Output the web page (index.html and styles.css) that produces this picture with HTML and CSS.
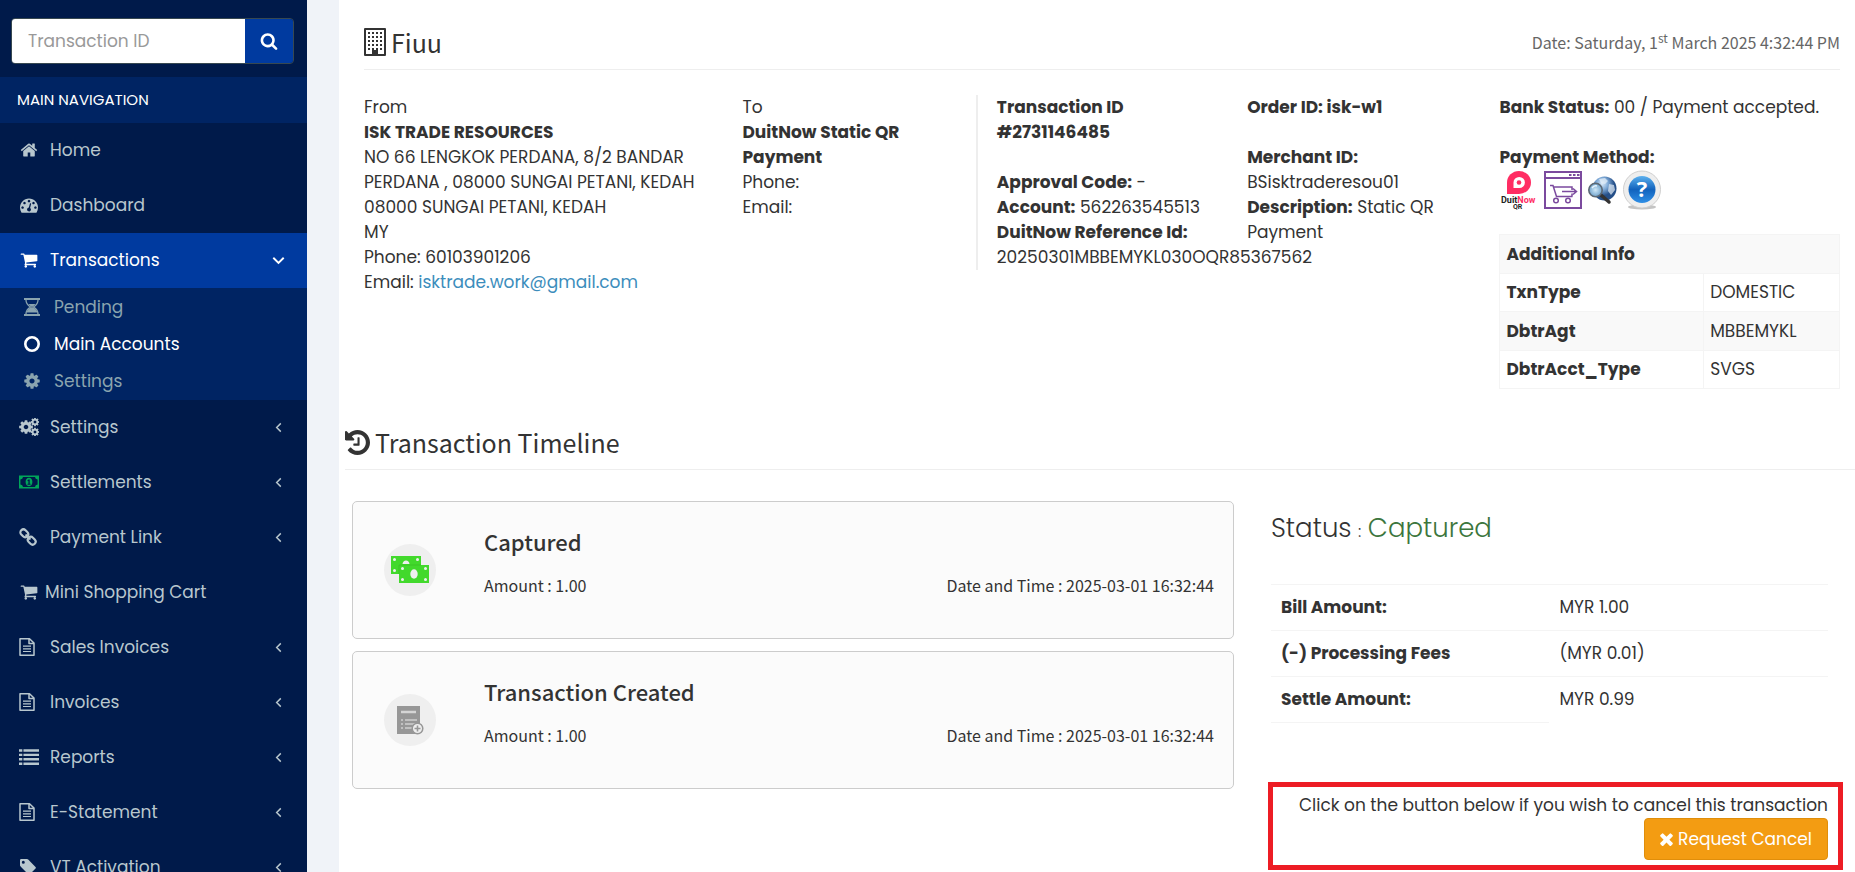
FILE: index.html
```html
<!DOCTYPE html>
<html lang="en">
<head>
<meta charset="utf-8">
<meta name="viewport" content="width=device-width, initial-scale=1">
<title>Fiuu</title>
<link rel="stylesheet" href="styles.css">
</head>
<body>

<!-- Icon sprite -->
<svg class="sprite" aria-hidden="true">
  <symbol id="i-search" viewBox="0 0 1792 1792"><path d="M1216 832q0-185-131.500-316.500t-316.500-131.500-316.500 131.500-131.500 316.500 131.500 316.500 316.500 131.500 316.500-131.500 131.500-316.500zm512 832q0 52-38 90t-90 38q-54 0-90-38l-343-342q-179 124-399 124-143 0-273.500-55.500t-225-150-150-225-55.500-273.500 55.500-273.500 150-225 225-150 273.500-55.500 273.500 55.500 225 150 150 225 55.500 273.500q0 220-124 399l343 343q37 37 37 90z"/></symbol>
  <symbol id="i-home" viewBox="0 0 1792 1792"><path d="M1472 992v480q0 26-19 45t-45 19h-384v-384h-256v384h-384q-26 0-45-19t-19-45v-480q0-1 .5-3t.5-3l575-474 575 474q1 2 1 6zm223-69l-62 74q-8 9-21 11h-3q-13 0-21-7l-692-577-692 577q-12 8-24 7-13-2-21-11l-62-74q-8-10-7-23.500t11-21.500l719-599q32-26 76-26t76 26l244 204v-195q0-14 9-23t23-9h192q14 0 23 9t9 23v408l219 182q10 8 11 21.500t-7 23.500z"/></symbol>
  <symbol id="i-dashboard" viewBox="0 0 1792 1792"><path d="M384 1152q0-53-37.500-90.500t-90.500-37.500-90.500 37.500-37.500 90.500 37.500 90.500 90.500 37.500 90.500-37.500 37.500-90.500zm192-448q0-53-37.500-90.500t-90.500-37.500-90.500 37.500-37.500 90.500 37.500 90.500 90.500 37.500 90.500-37.500 37.500-90.500zm428 481l101-382q6-26-7.500-48.500t-38.500-29.500-48 6.500-30 39.500l-101 382q-60 5-107 43.500t-63 98.500q-20 77 20 146t117 89 146-20 89-117q16-60-6-117t-72-91zm660-33q0-53-37.500-90.500t-90.500-37.500-90.500 37.500-37.500 90.500 37.500 90.500 90.500 37.500 90.500-37.500 37.500-90.500zm-640-640q0-53-37.500-90.500t-90.500-37.500-90.500 37.500-37.500 90.500 37.500 90.500 90.500 37.500 90.500-37.500 37.500-90.500zm448 192q0-53-37.500-90.500t-90.500-37.500-90.500 37.500-37.500 90.500 37.500 90.500 90.500 37.500 90.500-37.500 37.500-90.500zm320 448q0 261-141 483-19 29-54 29h-1402q-35 0-54-29-141-221-141-483 0-182 71-348t191-286 286-191 348-71 348 71 286 191 191 286 71 348z"/></symbol>
  <symbol id="i-cart" viewBox="0 0 1792 1792"><path d="M704 1536q0 52-38 90t-90 38-90-38-38-90 38-90 90-38 90 38 38 90zm896 0q0 52-38 90t-90 38-90-38-38-90 38-90 90-38 90 38 38 90zm128-1088v512q0 24-16.500 42.500t-40.500 21.500l-1044 122q13 60 13 70 0 16-24 64h920q26 0 45 19t19 45-19 45-45 19h-1024q-26 0-45-19t-19-45q0-11 8-31.500t16-36 21.500-40 15.500-29.500l-177-823h-204q-26 0-45-19t-19-45 19-45 45-19h256q16 0 28.500 6.500t19.500 15.500 13 24.500 8 26 5.500 29.500 4.500 26h1201q26 0 45 19t19 45z"/></symbol>
  <symbol id="i-cog" viewBox="0 0 1792 1792"><path d="M1152 896q0-106-75-181t-181-75-181 75-75 181 75 181 181 75 181-75 75-181zm512-109v222q0 12-8 23t-20 13l-185 28q-19 54-39 91 35 50 107 138 10 12 10 25t-9 23q-27 37-99 108t-94 71q-12 0-26-9l-138-108q-44 23-91 38-16 136-29 186-7 28-36 28h-222q-14 0-24.500-8.500t-11.500-21.500l-28-184q-49-16-90-37l-141 107q-10 9-25 9-14 0-25-11-126-114-165-168-7-10-7-23 0-12 8-23 15-21 51-66.500t54-70.500q-27-50-41-99l-183-27q-13-2-21-12.500t-8-23.500v-222q0-12 8-23t19-13l186-28q14-46 39-92-40-57-107-138-10-12-10-24 0-10 9-23 26-36 98.500-107.500t94.500-71.500q13 0 26 10l138 107q44-23 91-38 16-136 29-186 7-28 36-28h222q14 0 24.500 8.500t11.500 21.500l28 184q49 16 90 37l142-107q9-9 24-9 13 0 25 10 129 119 165 170 7 8 7 22 0 12-8 23-15 21-51 66.500t-54 70.500q26 50 41 98l183 28q13 2 21 12.500t8 23.500z"/></symbol>
  <symbol id="i-cogs" viewBox="0 0 20 18">
    <use href="#i-cog" x="-1" y="1" width="16" height="16"/>
    <use href="#i-cog" x="11" y="-1" width="10" height="10"/>
    <use href="#i-cog" x="11" y="9" width="10" height="10"/>
  </symbol>
  <symbol id="i-hourglass" viewBox="0 0 16 18">
    <path d="M0 0h16v2H0zM0 16h16v2H0z"/>
    <path d="M2 2c0 4 2 5.500 4.500 7C4 10.500 2 12 2 16M14 2c0 4-2 5.500-4.500 7 2.500 1.500 4.500 3 4.500 7" fill="none" stroke="currentColor" stroke-width="1.300"/>
    <path d="M4.500 6h7L9 8.700h-2zM7 9.300h2c3 1.700 4 3 4.300 5.200H2.700C3 12.300 4 11 7 9.300z"/>
  </symbol>
  <symbol id="i-circle" viewBox="-1 -1 18 18"><circle cx="8" cy="8" r="6.700" fill="none" stroke="currentColor" stroke-width="2.600"/></symbol>
  <symbol id="i-money" viewBox="0 0 20 14">
    <path fill-rule="evenodd" d="M0 .5h20v13H0zM4 2a3 3 0 0 1-2.600 2.600v4.800A3 3 0 0 1 4 12h12a3 3 0 0 1 2.600-2.600V4.600A3 3 0 0 1 16 2z"/>
    <path fill-rule="evenodd" d="M10 2.800c2.200 0 3.400 2 3.400 4.200s-1.200 4.200-3.400 4.200S6.600 9.200 6.600 7 7.800 2.800 10 2.800zm-.4 1.600L8.300 5.600l.6.700.5-.3v2.700H8.500v1h3v-1h-.8V4.400z"/>
  </symbol>
  <symbol id="i-link" viewBox="0 0 18 18" preserveAspectRatio="xMinYMid">
    <g fill="none" stroke="currentColor" stroke-width="2.200" stroke-linecap="round" transform="rotate(45 9 9)">
      <rect x="-.5" y="6" width="8.500" height="6" rx="3"/>
      <rect x="10" y="6" width="8.500" height="6" rx="3"/>
      <path d="M6.500 9h5"/>
    </g>
  </symbol>
  <symbol id="i-file" viewBox="0 0 16 18" preserveAspectRatio="xMinYMid">
    <path d="M1 .8h9.500L15 5v12.200H1zM10 .8v4.700h5" fill="none" stroke="currentColor" stroke-width="1.500" stroke-linejoin="round"/>
    <path d="M4 7.500h8v1.200H4zM4 10.200h8v1.200H4zM4 12.900h8v1.200H4z"/>
  </symbol>
  <symbol id="i-list" viewBox="0 0 18 16" preserveAspectRatio="xMinYMid"><path d="M0 1h3v2.200H0zM4 1h14v2.200H4zM0 5h3v2.200H0zM4 5h14v2.200H4zM0 9h3v2.200H0zM4 9h14v2.200H4zM0 13h3v2.200H0zM4 13h14v2.200H4z"/></symbol>
  <symbol id="i-tag" viewBox="-1 -1 18 18" preserveAspectRatio="xMinYMid"><path fill-rule="evenodd" d="M0 1.200Q0 0 1.200 0H7l1.200.6 7.300 7.300q.8.800 0 1.600l-5.600 5.700q-.9.800-1.700 0L.8 7.800 0 6.400zM3.300 1.800a1.500 1.500 0 1 0 0 3 1.500 1.500 0 0 0 0-3z"/></symbol>
  <symbol id="i-left" viewBox="0 0 8 12"><path d="M6.500 1.500L2 6l4.500 4.500" fill="none" stroke="currentColor" stroke-width="1.600"/></symbol>
  <symbol id="i-down" viewBox="0 0 12 8"><path d="M1.200 1.500L6 6.200l4.800-4.700" fill="none" stroke="currentColor" stroke-width="1.800"/></symbol>
  <symbol id="i-history" viewBox="0 0 1536 1536"><path transform="translate(-128 -128)" d="M1664 896q0 156-61 298t-164 245-245 164-298 61q-172 0-327-72.500t-264-204.500q-7-10-6.500-22.500t8.500-20.500l137-138q10-9 25-9 16 2 23 12 73 95 179 147t225 52q104 0 198.500-40.500t163.500-109.500 109.500-163.500 40.500-198.500-40.500-198.500-109.500-163.500-163.500-109.500-198.500-40.500q-98 0-188 35.500t-160 101.500l137 138q31 30 14 69-17 40-59 40h-448q-26 0-45-19t-19-45v-448q0-42 40-59 39-17 69 14l130 129q107-101 244.500-156.500t284.500-55.500q156 0 298 61t245 164 164 245 61 298zm-640-288v448q0 14-9 23t-23 9h-320q-14 0-23-9t-9-23v-64q0-14 9-23t23-9h224v-352q0-14 9-23t23-9h64q14 0 23 9t9 23z"/></symbol>
  <symbol id="i-times" viewBox="302 238 1188 1316"><path d="M1490 1322q0 40-28 68l-136 136q-28 28-68 28t-68-28l-294-294-294 294q-28 28-68 28t-68-28l-136-136q-28-28-28-68t28-68l294-294-294-294q-28-28-28-68t28-68l136-136q28-28 68-28t68 28l294 294 294-294q28-28 68-28t68 28l136 136q28 28 28 68t-28 68l-294 294 294 294q28 28 28 68z"/></symbol>
  <symbol id="i-building" viewBox="0 0 22 28">
    <path d="M1 1h20v26H1z" fill="none" stroke="currentColor" stroke-width="2" stroke-linejoin="round"/>
    <path d="M4 5h14M4 9h14M4 13h14M4 17h14M4 21h14" fill="none" stroke="currentColor" stroke-width="2" stroke-dasharray="2 2"/>
    <path d="M8 22h6v5H8z"/>
  </symbol>
</svg>

<div class="wrapper">

<aside class="sidebar">
  <form class="search">
    <input type="text" placeholder="Transaction ID" aria-label="Transaction ID">
    <button type="button" aria-label="Search"><svg class="icon"><use href="#i-search"/></svg></button>
  </form>
  <div class="nav-header">MAIN NAVIGATION</div>
  <ul class="menu">
    <li><a href="#"><svg class="icon"><use href="#i-home"/></svg>Home</a></li>
    <li><a href="#"><svg class="icon"><use href="#i-dashboard"/></svg>Dashboard</a></li>
    <li class="active">
      <a href="#"><svg class="icon"><use href="#i-cart"/></svg>Transactions<svg class="arrow"><use href="#i-down"/></svg></a>
      <ul class="submenu">
        <li><a href="#"><svg class="icon"><use href="#i-hourglass"/></svg>Pending</a></li>
        <li class="current"><a href="#"><svg class="icon"><use href="#i-circle"/></svg>Main Accounts</a></li>
        <li><a href="#"><svg class="icon"><use href="#i-cog"/></svg>Settings</a></li>
      </ul>
    </li>
    <li><a href="#"><svg class="icon"><use href="#i-cogs"/></svg>Settings<svg class="arrow"><use href="#i-left"/></svg></a></li>
    <li><a href="#"><svg class="icon green"><use href="#i-money"/></svg>Settlements<svg class="arrow"><use href="#i-left"/></svg></a></li>
    <li><a href="#"><svg class="icon"><use href="#i-link"/></svg>Payment Link<svg class="arrow"><use href="#i-left"/></svg></a></li>
    <li class="tight"><a href="#"><svg class="icon"><use href="#i-cart"/></svg>Mini Shopping Cart</a></li>
    <li><a href="#"><svg class="icon"><use href="#i-file"/></svg>Sales Invoices<svg class="arrow"><use href="#i-left"/></svg></a></li>
    <li><a href="#"><svg class="icon"><use href="#i-file"/></svg>Invoices<svg class="arrow"><use href="#i-left"/></svg></a></li>
    <li><a href="#"><svg class="icon"><use href="#i-list"/></svg>Reports<svg class="arrow"><use href="#i-left"/></svg></a></li>
    <li><a href="#"><svg class="icon"><use href="#i-file"/></svg>E-Statement<svg class="arrow"><use href="#i-left"/></svg></a></li>
    <li><a href="#"><svg class="icon"><use href="#i-tag"/></svg>VT Activation<svg class="arrow"><use href="#i-left"/></svg></a></li>
  </ul>
</aside>

<main class="content">
  <section class="invoice">
    <div class="page-header">
      <h2><svg class="building"><use href="#i-building"/></svg>Fiuu</h2>
      <small>Date: Saturday, 1<sup>st</sup> March 2025 4:32:44 PM</small>
    </div>

    <div class="invoice-info">
      <div class="col">
        From
        <address>
          <strong>ISK TRADE RESOURCES</strong><br>
          NO 66 LENGKOK PERDANA, 8/2 BANDAR<br>
          PERDANA , 08000 SUNGAI PETANI, KEDAH<br>
          08000 SUNGAI PETANI, KEDAH<br>
          MY<br>
          Phone: 60103901206<br>
          Email: <a href="mailto:isktrade.work@gmail.com">isktrade.work@gmail.com</a>
        </address>
      </div>
      <div class="col">
        To
        <address>
          <strong>DuitNow Static QR<br>Payment</strong><br>
          Phone:<br>
          Email:
        </address>
      </div>
      <div class="col divided">
        <b>Transaction ID<br>#2731146485</b><br>
        <br>
        <b>Approval Code:</b> -<br>
        <b>Account:</b> 562263545513<br>
        <b>DuitNow Reference Id:</b><br>
        20250301MBBEMYKL030OQR85367562
      </div>
      <div class="col">
        <b>Order ID: isk-w1</b><br>
        <br>
        <b>Merchant ID:</b><br>
        BSisktraderesou01<br>
        <b>Description:</b> Static QR<br>
        Payment
      </div>
      <div class="col">
        <b>Bank Status:</b> 00 / Payment accepted.<br>
        <br>
        <b>Payment Method:</b>
        <div class="methods">
          <!-- DuitNow QR -->
          <svg width="40" height="40" viewBox="0 0 40 40">
            <path d="M8 24V12.500A12 11.500 0 1 1 20 24z" fill="#ff2d63"/>
            <path d="M14.500 18v-5.500a5.700 5.500 0 1 1 5.700 5.500z" fill="#fff"/>
            <circle cx="20" cy="12.500" r="2.300" fill="#ff2d63"/>
            <text x="2" y="33" class="logo-text" fill="#222">Duit<tspan fill="#ff2d63">Now</tspan></text>
            <text x="14" y="39" class="logo-qr" fill="#222">QR</text>
          </svg>
          <!-- Online channel -->
          <svg class="line-art" width="38" height="38" viewBox="0 0 38 38" stroke="#7b4a9e" stroke-width="1.500">
            <rect x="1" y="1" width="36" height="36" stroke-width="2"/>
            <path d="M1 7h36" stroke-width="2"/>
            <path d="M25 4h2.500M29 4h2.500M33 4h2.500" stroke-width="2.200"/>
            <path d="M6 14.500h3l3.500 11h16M9.500 16h18.500v3M28 25.500v-3M18 20.500h14M29 17.500l3.500 3-3.500 3"/>
            <circle cx="12" cy="29.500" r="2.300"/><circle cx="24" cy="29.500" r="2.300"/>
          </svg>
          <!-- Lookup -->
          <svg width="30" height="30" viewBox="0 0 30 30">
            <defs>
              <radialGradient id="globe" cx="40%" cy="30%"><stop offset="0" stop-color="#dcecfa"/><stop offset=".5" stop-color="#7ea9d6"/><stop offset="1" stop-color="#254f88"/></radialGradient>
              <radialGradient id="lens"><stop offset="0" stop-color="#cfe8f8"/><stop offset="1" stop-color="#6fa3cd"/></radialGradient>
            </defs>
            <circle cx="17.500" cy="13.500" r="12" fill="url(#globe)"/>
            <path d="M12 4l6-1 3 3-3 3-4-1zM22 9l5 1 1 5-4 5-3-4z" fill="#e7f1fa" opacity=".7"/>
            <path d="M14 20l8 7" stroke="#333" stroke-width="3.500" stroke-linecap="round"/>
            <circle cx="8.500" cy="15" r="6.700" fill="url(#lens)" stroke="#5c6874" stroke-width="1.600"/>
            <path d="M5 13q2-3 5-2" stroke="#e8f5ff" stroke-width="1.500" fill="none"/>
          </svg>
          <!-- Help -->
          <svg width="40" height="40" viewBox="0 0 40 40">
            <defs>
              <linearGradient id="ball" x2="0" y2="1"><stop offset="0" stop-color="#5bb0ee"/><stop offset=".5" stop-color="#1263bd"/><stop offset="1" stop-color="#2f8fe6"/></linearGradient>
            </defs>
            <ellipse cx="20" cy="37" rx="14" ry="2.500" fill="#c4c4c4"/>
            <circle cx="20" cy="19.500" r="18.500" fill="#eee" stroke="#cfcfcf"/>
            <circle cx="20" cy="19.500" r="13.500" fill="url(#ball)"/>
            <text x="20" y="27" text-anchor="middle" class="help-mark">?</text>
          </svg>
        </div>
        <table class="info-table">
          <thead>
            <tr><th colspan="2">Additional Info</th></tr>
          </thead>
          <tbody>
            <tr><th>TxnType</th><td>DOMESTIC</td></tr>
            <tr><th>DbtrAgt</th><td>MBBEMYKL</td></tr>
            <tr><th>DbtrAcct_Type</th><td>SVGS</td></tr>
          </tbody>
        </table>
      </div>
    </div>
  </section>

  <section class="timeline">
    <h2 class="timeline-header"><svg class="history"><use href="#i-history"/></svg>Transaction Timeline</h2>
    <div class="timeline-body">
      <div class="events">
        <div class="event">
          <div class="event-icon">
            <svg width="38" height="28" viewBox="0 0 38 28">
              <path d="M0 0h30v9H8v9H0z" fill="#42d92c"/>
              <rect x="8" y="9" width="30" height="18" fill="#42d92c"/>
              <path d="M8 18V9h22" fill="none" stroke="#35b823" stroke-width=".6"/>
              <g fill="#efefef">
                <circle cx="3.500" cy="3.500" r="1.500"/><circle cx="3.500" cy="14.500" r="1.500"/><circle cx="26.500" cy="3.500" r="1.500"/>
                <path d="M11.500 8q.5-3.500 3.500-3.500t3.500 3.500z"/>
                <circle cx="11.500" cy="12.500" r="1.500"/><circle cx="11.500" cy="23.500" r="1.500"/><circle cx="34.500" cy="12.500" r="1.500"/><circle cx="34.500" cy="23.500" r="1.500"/>
                <ellipse cx="23" cy="18" rx="3.700" ry="4.700"/>
              </g>
            </svg>
          </div>
          <div class="event-text">
            <h3>Captured</h3>
            <div class="event-meta"><span>Amount : 1.00</span><span>Date and Time : 2025-03-01 16:32:44</span></div>
          </div>
        </div>
        <div class="event">
          <div class="event-icon">
            <svg width="28" height="30" viewBox="0 0 28 30">
              <rect x="1" y="1" width="23" height="28" fill="#979797"/>
              <path d="M5 7h15" stroke="#d5d5d5" stroke-width="2.500"/>
              <path d="M5 15h2M9 15h12M5 19h2M9 19h10M5 23h2M9 23h7" stroke="#d0d0d0" stroke-width="1.600"/>
              <circle cx="21.500" cy="23.500" r="5.300" fill="#eee" stroke="#979797" stroke-width="1.500"/>
              <path d="M18.500 23.500h6M21.500 20.500v6" stroke="#979797" stroke-width="1.600"/>
            </svg>
          </div>
          <div class="event-text">
            <h3>Transaction Created</h3>
            <div class="event-meta"><span>Amount : 1.00</span><span>Date and Time : 2025-03-01 16:32:44</span></div>
          </div>
        </div>
      </div>

      <div class="summary">
        <p class="status"><span>Status</span><small>:</small><span class="captured">Captured</span></p>
        <table class="amounts">
          <tbody>
            <tr><th>Bill Amount:</th><td>MYR 1.00</td></tr>
            <tr><th>(-) Processing Fees</th><td>(MYR 0.01)</td></tr>
            <tr><th>Settle Amount:</th><td>MYR 0.99</td></tr>
          </tbody>
        </table>
        <div class="cancel-box">
          <span>Click on the button below if you wish to cancel this transaction</span>
          <button type="button" class="btn-warning"><svg class="times"><use href="#i-times"/></svg>Request Cancel</button>
        </div>
      </div>
    </div>
  </section>
</main>

</div>
</body>
</html>
```

FILE: styles.css
```css
* {
  box-sizing: border-box;
}

body {
  margin: 0;
  font-family: Poppins, Inter, sans-serif;
  font-size: 17px;
  line-height: 25px;
  font-weight: 400;
  color: #333;
  background-color: #f0f3f8;
}

a {
  color: #3c8dbc;
  text-decoration: none;
}

h2, h3, small, .event-meta {
  font-family: "Source Sans Pro", "Noto Sans CJK SC", sans-serif;
  margin: 0;
}

svg {
  fill: currentColor;
  flex: none;
}

.sprite {
  display: none;
}

.wrapper {
  display: flex;
  height: 100vh;
  overflow: hidden;
}

/* Sidebar */
.sidebar {
  flex: none;
  width: 307px;
  color: #b8c7ce;
  background-color: #001a4a;
}

.search {
  display: flex;
  margin: 18px 13px 13px 11px;
  border: 1px solid #374850;
  border-radius: 4px;
  overflow: hidden;
}

.search input {
  flex: 1;
  min-width: 0;
  height: 44px;
  padding: 0 16px;
  border: none;
  font: inherit;
  background-color: #fff;
}

.search input::placeholder {
  color: #999;
}

.search button {
  display: flex;
  align-items: center;
  justify-content: center;
  width: 48px;
  border: none;
  color: #fff;
  background-color: #003a9f;
}

.icon {
  width: 18px;
  height: 18px;
}

.nav-header {
  padding: 11px 17px;
  font-size: 15px;
  line-height: 24px;
  color: #fff;
  background-color: #002463;
}

.menu, .submenu {
  list-style: none;
  margin: 0;
  padding: 0;
}

.menu a {
  display: flex;
  align-items: center;
  gap: 11px;
  height: 55px;
  padding: 0 22px 0 19px;
  color: inherit;
}

.menu .tight a {
  gap: 6px;
}

.menu .icon {
  width: 20px;
  margin-bottom: 2px;
}

.menu .arrow {
  width: 13px;
  height: 11px;
  margin-left: auto;
}

.active > a {
  color: #fff;
  background-color: #003a9f;
}

.menu .submenu a {
  gap: 12px;
  height: 37px;
  padding-left: 22px;
}

.submenu {
  padding-top: 1px;
  color: #8aa4af;
  background-color: #002463;
}

.submenu .current {
  color: #fff;
}

.green {
  color: #00a65a;
}

/* Main content */
.content {
  flex: 1;
  min-width: 0;
  margin-left: 32px;
  background-color: #fff;
}

.invoice {
  padding: 24px 15px 0 25px;
}

.page-header {
  display: flex;
  align-items: center;
  justify-content: space-between;
  padding-bottom: 9px;
  border-bottom: 1px solid #eee;
}

h2 {
  display: flex;
  align-items: center;
  font-size: 25px;
  line-height: 36px;
  font-weight: 400;
}

.building {
  width: 22px;
  height: 28px;
  margin-right: 5px;
}

.page-header small {
  font-size: 16px;
  color: #666;
}

sup {
  font-size: 12px;
  line-height: 0;
}

.invoice-info {
  display: grid;
  grid-template-columns: 3fr 2fr 2fr 2fr 3fr;
  margin: 25px -19px 0;
}

.col {
  min-width: 0;
  padding: 0 19px;
  white-space: nowrap;
}

.divided {
  align-self: start;
  border-left: 2px solid #eee;
}

address {
  font-style: normal;
}

.methods {
  display: flex;
  align-items: center;
  gap: 5px;
  margin-bottom: 24px;
}

.logo-text {
  font: bold 9px Roboto, sans-serif;
}

.logo-qr {
  font: bold 7px Roboto, sans-serif;
}

.line-art {
  fill: none;
}

.help-mark {
  font: bold 22px "Open Sans", sans-serif;
  fill: #fff;
}

table {
  width: 100%;
  border-collapse: collapse;
}

th {
  text-align: left;
}

.info-table th, .info-table td {
  padding: 6px;
  border: 1px solid #f4f4f4;
}

.info-table tbody th {
  width: 60%;
}

.info-table thead tr, .info-table tbody tr:nth-child(even) {
  height: 39px;
  background-color: #f9f9f9;
}

/* Timeline */
.timeline {
  padding: 35px 0 0 6px;
}

.timeline-header {
  padding-bottom: 9px;
  border-bottom: 1px solid #eee;
}

.history {
  width: 25px;
  height: 25px;
  margin-right: 5px;
}

.timeline-body {
  display: grid;
  grid-template-columns: 19fr 12fr;
  gap: 37px;
  padding: 31px 27px 0 7px;
}

.events {
  display: flex;
  flex-direction: column;
  gap: 12px;
}

.event {
  display: flex;
  align-items: center;
  height: 138px;
  padding: 0 19px 0 31px;
  border: 1px solid #ccc;
  border-radius: 5px;
  background-color: #fbfbfb;
}

.event-icon {
  display: flex;
  align-items: center;
  justify-content: center;
  flex: none;
  width: 52px;
  height: 52px;
  margin-right: 48px;
  border-radius: 50%;
  background-color: #efefef;
}

.event-text {
  flex: 1;
  padding-bottom: 16px;
}

h3 {
  margin-bottom: 18px;
  font-size: 22px;
  line-height: 28px;
  font-weight: 500;
}

.event-meta {
  display: flex;
  justify-content: space-between;
  font-size: 16px;
}

.status {
  display: flex;
  align-items: baseline;
  gap: 6px;
  margin: 8px 0 35px;
  font-size: 26px;
  line-height: 38px;
  font-weight: 300;
}

.status small {
  font-size: 17px;
}

.captured {
  color: #3c763d;
}

.amounts th, .amounts td {
  height: 46px;
  padding: 0 10px;
  border-top: 1px solid #f4f4f4;
}

.amounts th {
  width: 50%;
}

.amounts tr:last-child th {
  border-bottom: 1px solid #f4f4f4;
}

.cancel-box {
  display: flex;
  flex-direction: column;
  align-items: flex-end;
  margin: 59px -15px 0 -3px;
  padding: 6px 10px 5px;
  border: 5px solid #ed1c24;
  white-space: nowrap;
}

.btn-warning {
  display: flex;
  align-items: center;
  gap: 5px;
  height: 42px;
  padding: 0 15px;
  border: 1px solid #e08e0b;
  border-radius: 4px;
  font: inherit;
  color: #fff;
  background-color: #f39c12;
}

.times {
  width: 13px;
  height: 14px;
}
```
